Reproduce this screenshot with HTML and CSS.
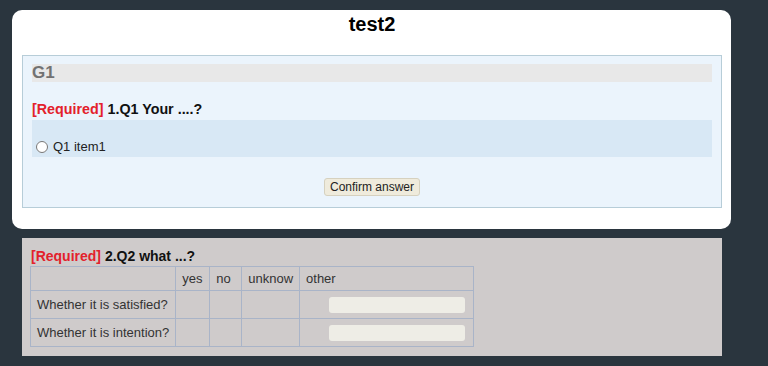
FILE: index.html
```html
<!DOCTYPE html>
<html lang="en">
<head>
  <meta charset="utf-8">
  <title>test2</title>
  <link rel="stylesheet" href="styles.css">
</head>
<body>
  <div id="card">
    <h2 class="title">test2</h2>
    <div class="group">
      <div class="group-name">G1</div>
      <div class="question"><span class="req">[Required]</span> 1.Q1 Your ....?</div>
      <div class="options">
        <label class="option"><input type="radio" name="q1"> Q1 item1</label>
      </div>
      <div class="actions">
        <button class="confirm">Confirm answer</button>
      </div>
    </div>
  </div>

  <div class="group2">
    <div class="question"><span class="req">[Required]</span> 2.Q2 what ...?</div>
    <table class="matrix">
      <tr>
        <th></th>
        <th>yes</th>
        <th>no</th>
        <th>unknow</th>
        <th class="other">other</th>
      </tr>
      <tr>
        <td>Whether it is satisfied?</td>
        <td></td>
        <td></td>
        <td></td>
        <td class="other-cell"><input type="text" class="other-input"></td>
      </tr>
      <tr>
        <td>Whether it is intention?</td>
        <td></td>
        <td></td>
        <td></td>
        <td class="other-cell"><input type="text" class="other-input"></td>
      </tr>
    </table>
  </div>
</body>
</html>
```

FILE: styles.css
```css
body {
  margin: 0;
  background-color: #2a353e;
  font-family: "Liberation Sans", Arial, sans-serif;
  height: 366px;
  overflow: hidden;
}
#card {
  width: 700px;
  margin: 10px 0 0 12px;
  padding: 1px 9px 21px 10px;
  background-color: #fff;
  border-radius: 10px;
}
.title {
  margin: 1px 0 19px;
  text-align: center;
  font-size: 20px;
  line-height: 24px;
  color: #000;
}
.group {
  border: 1px solid #b7cdd8;
  background-color: #ebf4fc;
  padding: 8px 9px 11px;
}
.group-name {
  background-color: #e8e8e8;
  color: #727272;
  font-weight: bold;
  font-size: 17px;
  line-height: 18px;
}
.question {
  font-weight: bold;
  font-size: 14.3px;
  line-height: 18px;
  color: #111;
  margin-top: 18px;
}
.req {
  color: #e3212b;
}
.options {
  margin-top: 2px;
  background-color: #d8e8f5;
  padding: 19px 0 3px 4px;
}
.option {
  font-size: 13px;
  line-height: 15px;
  color: #222;
  display: flex;
  align-items: center;
  gap: 2px;
}
.option input {
  margin: 0 3px 0 0;
  width: 12px;
  height: 12px;
}
.actions {
  text-align: center;
  margin-top: 20px;
}
.confirm {
  font-family: "Liberation Sans", Arial, sans-serif;
  font-size: 12px;
  height: 18px;
  padding: 0 5px;
  background-color: #efebdc;
  border: 1px solid #d6d1bf;
  border-radius: 3px;
  color: #222;
}
.group2 {
  width: 690px;
  height: 102px;
  margin: 9px 0 0 22px;
  padding: 8px 1px 8px 9px;
  background-color: #cfcbcb;
}
.group2 .question {
  margin-top: 0;
  font-size: 14px;
  line-height: 20px;
}
.matrix {
  border-collapse: collapse;
  border: 1px solid #a9b4c8;
  margin-left: -1px;
  font-size: 13px;
  color: #333;
}
.matrix th, .matrix td {
  border: 1px solid #a9b4c8;
  padding: 0 6px;
  font-weight: normal;
  text-align: left;
  white-space: nowrap;
}
.matrix th {
  height: 23px;
}
.matrix td {
  height: 27px;
}
.matrix th:nth-child(1) {
  width: 132px;
}
.matrix th:nth-child(2) {
  width: 21px;
}
.matrix th:nth-child(3) {
  width: 19px;
}
.matrix th:nth-child(4) {
  width: 42px;
}
.matrix th.other {
  width: 161px;
}
.matrix td.other-cell {
  text-align: right;
  padding-right: 8px;
}
.other-input {
  width: 136px;
  height: 16px;
  box-sizing: border-box;
  border: none;
  border-radius: 3px;
  background-color: #eeede6;
  vertical-align: middle;
}
```
